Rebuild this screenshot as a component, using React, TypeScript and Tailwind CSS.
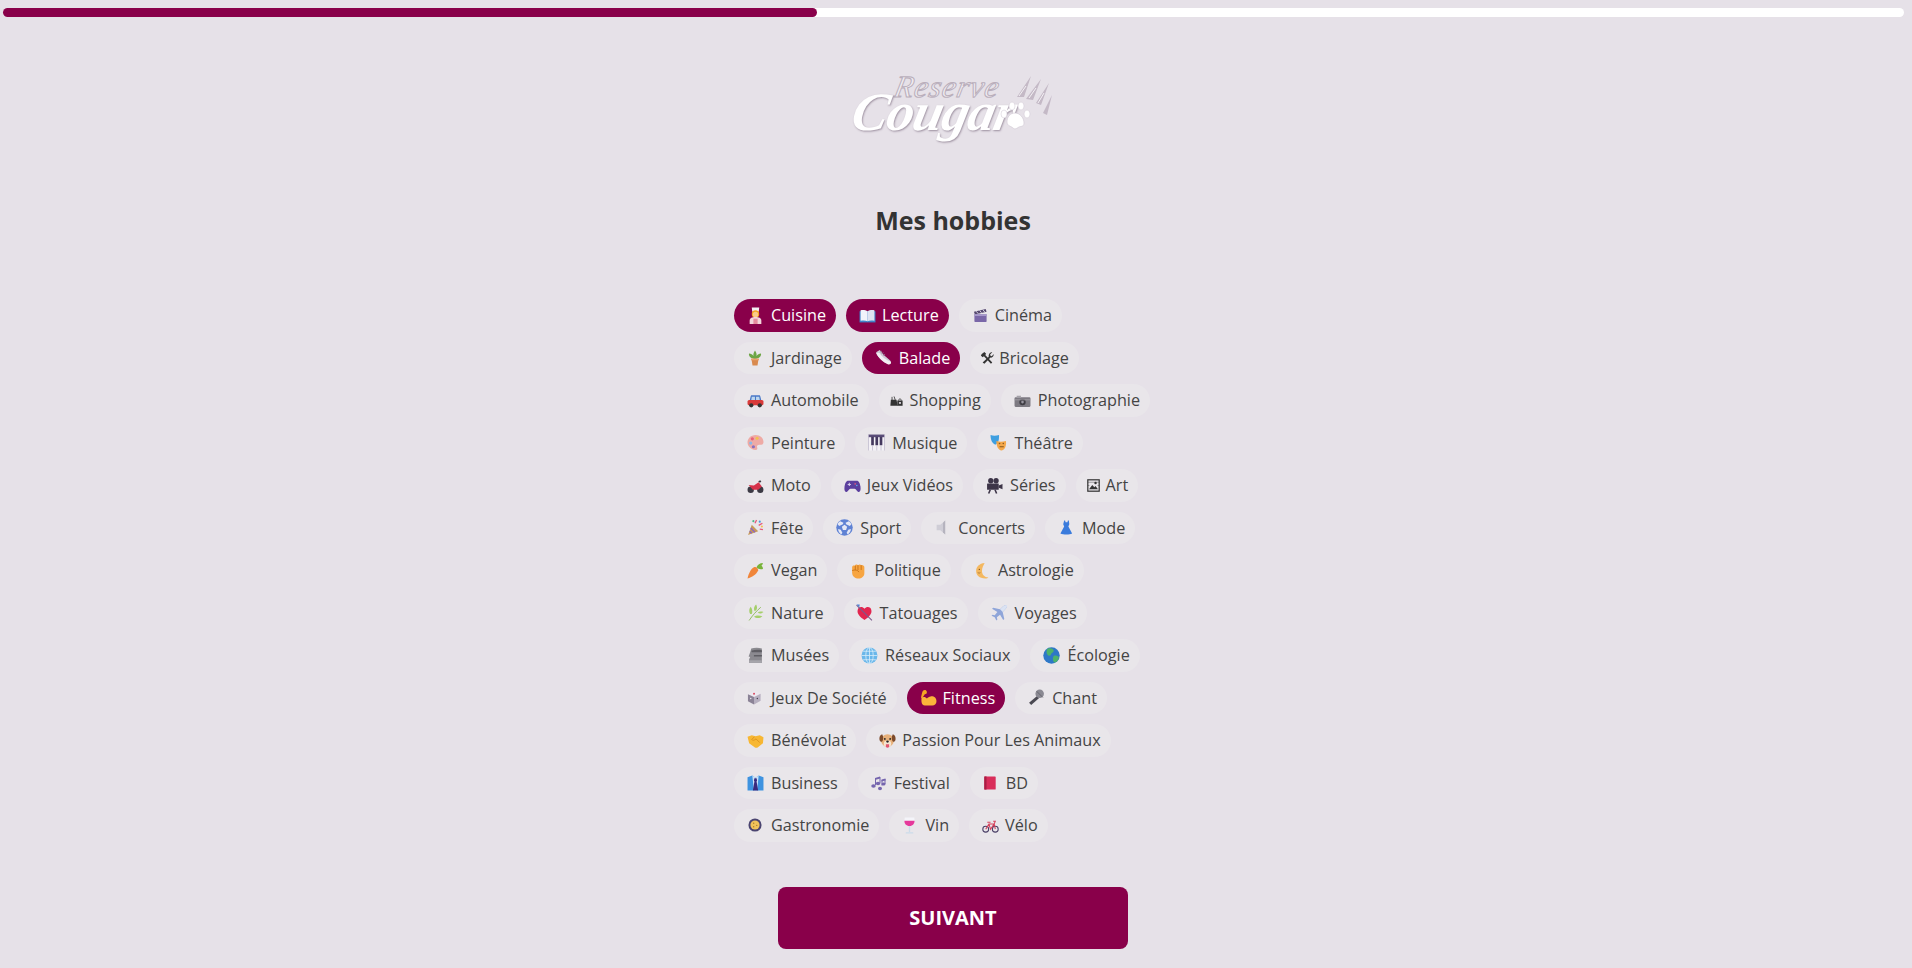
import type { ReactNode } from "react";

type Hobby = { label: string; lead: string; size: string; active?: boolean; icon: ReactNode };

const normal = "pl-[13px] pr-[7px]";

const hobbies: Hobby[] = [
  { label: "Cuisine", lead: normal, size: "w-[17px]", active: true, icon: <><path d="M9 1h14l-1 8H10z" fill="#f4f1f4" /><ellipse cx="16" cy="13" rx="7" ry="7" fill="#f5a623" /><circle cx="16" cy="14" r="5" fill="#fbc98a" /><path d="M5 32v-6c0-5 5-7 11-7s11 2 11 7v6z" fill="#f3d6dc" /><rect x="12" y="22" width="8" height="10" fill="#e58b9e" /></> },
  { label: "Lecture", lead: "pl-[13px] pr-[6px]", size: "w-[17px]", active: true, icon: <><path d="M1 8h30v21H1z" fill="#3f83c9" /><path d="M3 6c5-1 10 0 13 2v19c-3-2-8-2-13-1z" fill="#f2f4fb" /><path d="M29 6c-5-1-10 0-13 2v19c3-2 8-2 13-1z" fill="#dfe4f2" /></> },
  { label: "Cinéma", lead: "pl-[14px] pr-[7px]", size: "w-[15px]", icon: <><rect x="3" y="13" width="26" height="17" rx="1.5" fill="#7a67a8" /><path d="M2 8l25-6 2 6-25 6z" fill="#56496f" /><path d="M7 7l4 5M14 5l4 5M21 3.500l4 5" stroke="#d8d2e4" strokeWidth="2" /><rect x="3" y="13" width="26" height="4" fill="#a99bcb" /></> },
  { label: "Jardinage", lead: "pl-[13px] pr-[8px]", size: "w-[16px]", icon: <><path d="M16 18C7 17 3 12 4 7c4 0 7 2 9 5-1-4 1-8 3-11 2 3 4 7 3 11 2-3 5-5 9-5 1 5-3 10-12 11z" fill="#6da544" /><path d="M9 18h14l-2 13H11z" fill="#d98a4e" /><rect x="8" y="17" width="16" height="3.500" fill="#e9a06a" /></> },
  { label: "Balade", lead: normal, size: "w-[17px]", active: true, icon: <><path d="M2 6l7-4 7 9 12 10c3 3 2 8-2 7-9-2-16-8-20-14C4 11 3 9 2 6z" fill="#cfcad6" /><path d="M2 8c5 9 13 17 23 21 3 1 6-2 5-5-9-3-17-9-22-17z" fill="#f3eef3" /><path d="M9 6l4-2M12 9l4-2M15 12l4-2" stroke="#8f8798" strokeWidth="1.500" /></> },
  { label: "Bricolage", lead: "pl-[10px] pr-[5px]", size: "w-[14px]", icon: <><path d="M4 7l6-5 4 4-2 3 16 17-3 3L9 12 6 14 2 10z" fill="#333" /><path d="M28 3l-5 5 1 3 3 1 4-5c1 5-3 9-7 8L10 29l-4-3 14-13c-1-5 3-11 8-10z" fill="#333" /></> },
  { label: "Automobile", lead: normal, size: "w-[17px]", icon: <><path d="M7 8c0-1 1-2 2-2h14c1 0 2 1 2 2l2 8H5z" fill="#4a78c7" /><path d="M9 9h6v6H8zM17 9h6l1 6h-7z" fill="#bcd6ee" /><rect x="1" y="15" width="30" height="10" rx="3" fill="#d93a3a" /><circle cx="8" cy="25" r="4" fill="#333" /><circle cx="24" cy="25" r="4" fill="#333" /></> },
  { label: "Shopping", lead: "pl-[11px] pr-[7px]", size: "w-[13px]", icon: <><path d="M2 14h14l3 15H1z" fill="#333" /><path d="M5 15V7M13 15l-3-9" stroke="#333" strokeWidth="2" /><path d="M18 16h13v13H18z" fill="#333" /><path d="M21 16c0-5 7-5 7 0" stroke="#333" strokeWidth="2" fill="none" /><rect x="22" y="20" width="5" height="4" fill="#e6e1e8" /></> },
  { label: "Photographie", lead: normal, size: "w-[17px]", icon: <><rect x="1" y="10" width="30" height="18" rx="2" fill="#7d7a82" /><rect x="5" y="7" width="8" height="4" fill="#a5a2a9" /><circle cx="16" cy="19" r="6" fill="#3f3d44" /><circle cx="16" cy="19" r="2.500" fill="#9a97a1" /><rect x="1" y="14" width="30" height="1.500" fill="#a5a2a9" /></> },
  { label: "Peinture", lead: normal, size: "w-[17px]", icon: <><path d="M16 2C7 2 1 9 1 16s7 14 15 14c4 0 4-3 3-5-1-3 1-5 4-5h4c3 0 4-3 4-5C31 8 25 2 16 2z" fill="#eeaaa5" /><circle cx="10" cy="9" r="3" fill="#e9607a" /><circle cx="19" cy="8" r="3" fill="#f2c14e" /><circle cx="7" cy="17" r="3" fill="#8bb8e8" /><circle cx="12" cy="24" r="3" fill="#8a6fc0" /></> },
  { label: "Musique", lead: normal, size: "w-[17px]", icon: <><rect x="1" y="1" width="30" height="30" fill="#f4f2f7" /><rect x="1" y="1" width="30" height="5" fill="#5a4d78" /><path d="M6 5h5v16H6zM14 5h5v16h-5zM22 5h5v16h-5z" fill="#44395f" /><path d="M1 31V1M31 31V1M8.500 21v10M16.500 21v10M24.500 21v10" stroke="#b5aec4" strokeWidth="1.200" /></> },
  { label: "Théâtre", lead: normal, size: "w-[17px]", icon: <><path d="M1 2c5 2 10 2 16 0 0 8 0 15-7 18C4 18 1 11 1 2z" fill="#3f9fe0" /><path d="M12 13c6 2 11 2 18 0 1 8-1 16-8 18-7-1-10-9-10-18z" fill="#f5a84a" /><path d="M18 24h8" stroke="#8a5a20" strokeWidth="2" /><circle cx="18" cy="18" r="1.500" fill="#8a5a20" /><circle cx="25" cy="18" r="1.500" fill="#8a5a20" /></> },
  { label: "Moto", lead: normal, size: "w-[17px]", icon: <><circle cx="7" cy="24" r="6" fill="#3c3a44" /><circle cx="25" cy="24" r="6" fill="#3c3a44" /><path d="M3 15l10 1 4-3 5-3 6 8-7 6H11z" fill="#d6324a" /><path d="M21 8l4-2 2 3-3 2z" fill="#3c3a44" /></> },
  { label: "Jeux Vidéos", lead: "pl-[13px] pr-[6px]", size: "w-[17px]", icon: <><path d="M8 7h16c4 0 6 5 7 11 1 8-1 11-4 10-3-1-4-6-7-6h-8c-3 0-4 5-7 6-3 1-5-2-4-10C2 12 4 7 8 7z" fill="#5b3f9e" /><path d="M7 14h6M10 11v6" stroke="#d6cdec" strokeWidth="2" /><circle cx="21" cy="13" r="1.500" fill="#e55a7a" /><circle cx="24" cy="16" r="1.500" fill="#58a7e5" /></> },
  { label: "Séries", lead: "pl-[13px] pr-[7px]", size: "w-[17px]", icon: <><circle cx="9" cy="7" r="5" fill="#3d3548" /><circle cx="19" cy="7" r="5" fill="#3d3548" /><rect x="2" y="12" width="22" height="12" rx="1" fill="#3d3548" /><path d="M24 16l7-3v10l-7-3z" fill="#3d3548" /><path d="M8 24l-3 7M17 24l3 7" stroke="#3d3548" strokeWidth="3" /></> },
  { label: "Art", lead: "pl-[11px] pr-[6px]", size: "w-[13px]", icon: <><rect x="2" y="2" width="28" height="28" fill="none" stroke="#333" strokeWidth="3" /><path d="M5 25l8-10 5 5 3-3 6 8z" fill="#333" /><circle cx="21" cy="10" r="3" fill="#333" /><path d="M2 8h28M2 16h4M26 16h4" stroke="#333" strokeWidth="1" /></> },
  { label: "Fête", lead: normal, size: "w-[17px]", icon: <><path d="M2 30l7-19 12 12z" fill="#c79a5a" /><path d="M5 23l4 4M7 17l8 8" stroke="#8a64c8" strokeWidth="2.500" /><path d="M15 8l3-6M22 12l7-4M24 19l6 1" stroke="#e55a7a" strokeWidth="2.500" /><circle cx="24" cy="5" r="2" fill="#4a9be0" /><circle cx="28" cy="14" r="2" fill="#f2c14e" /><circle cx="12" cy="4" r="2" fill="#4fb58a" /></> },
  { label: "Sport", lead: normal, size: "w-[17px]", icon: <><circle cx="16" cy="16" r="15.500" fill="#5f82d4" /><path d="M16 11l5 3.500-2 6h-6l-2-6zM8 4l6 3-1 3-7 3-3-3c1-3 3-5 5-6zM24 4c2 1 4 3 5 6l-3 3-7-3-1-3zM4 19l5 1 3 6-2 3c-3-2-6-5-6-10zM28 19c0 5-3 8-6 10l-2-3 3-6z" fill="#e4e8f6" /></> },
  { label: "Concerts", lead: normal, size: "w-[17px]", icon: <><path d="M5 11h7l9-8v26l-9-8H5z" fill="#cfcdd6" /><path d="M17 7l4-4v26l-4-4z" fill="#b5b3be" /></> },
  { label: "Mode", lead: "pl-[14px] pr-[8px]", size: "w-[15px]", icon: <><path d="M11 1h2l1 4h4l1-4h2l1 8-2 5 8 15c-3 2-7 2-12 2s-10 0-13-2l8-15-2-5z" fill="#3a7bdc" /></> },
  { label: "Vegan", lead: normal, size: "w-[17px]", icon: <><path d="M1 31c2-9 6-18 12-21 4-2 8 2 8 6-3 7-12 13-20 15z" fill="#f0853a" /><path d="M18 10c2-5 6-8 12-8-1 3-1 4-3 5 2 1 3 3 3 6-4 1-9 1-12-3z" fill="#78b33a" /></> },
  { label: "Politique", lead: normal, size: "w-[17px]", icon: <><path d="M4 10c0-3 3-4 5-3 1-3 5-3 6-1 2-2 5-2 6 0 3-1 6 1 6 4v11c0 6-5 10-11 10S4 27 4 20z" fill="#f7a541" /><path d="M10 7v8M15 6v9M21 6v9M4 16c5-2 11-1 13 3" stroke="#c9741a" strokeWidth="1.800" fill="none" /></> },
  { label: "Astrologie", lead: normal, size: "w-[17px]", icon: <><path d="M20 2C10 3 4 9 4 17s6 14 17 14c3 0 5-1 6-2-7 0-12-5-12-12 0-6 3-11 5-15z" fill="#f4b860" /><circle cx="10" cy="14" r="1.200" fill="#7a4d1c" /><path d="M7 20c2 1 4 1 5 0" stroke="#7a4d1c" fill="none" /></> },
  { label: "Nature", lead: normal, size: "w-[17px]", icon: <><path d="M4 31C10 22 17 14 26 6" stroke="#7fb545" strokeWidth="1.500" fill="none" /><path d="M6 19C3 14 4 8 7 5c3 4 4 9 2 14zM14 13c-2-5 0-9 3-12 2 3 3 8 0 11zM13 24c4-3 10-3 16-1-4 4-11 5-16 1zM20 16c3-2 7-2 11-1-3 3-7 4-11 1z" fill="#a5cf6b" /></> },
  { label: "Tatouages", lead: "pl-[12px] pr-[7px]", size: "w-[17px]", icon: <><path d="M16 30C7 24 2 18 3 12c1-7 9-8 13-3 4-5 12-4 13 3 1 6-4 12-13 18z" fill="#e2264f" /><path d="M1 2l29 29" stroke="#7d5a8c" strokeWidth="2" /><path d="M1 1h6l-1 5z" fill="#4a84d6" /></> },
  { label: "Voyages", lead: normal, size: "w-[17px]", icon: <><path d="M30 2c-3-1-6 1-9 4l-4 4L4 7 2 9l10 6-5 6-4-1-2 2 6 3 3 6 2-2-1-4 6-5 6 10 2-2-3-13 4-4c3-3 5-6 4-9z" fill="#8fa5d9" /><path d="M30 2c-3-1-6 1-9 4l-4 4 5 5 4-4c3-3 5-6 4-9z" fill="#dbe3f3" /></> },
  { label: "Musées", lead: normal, size: "w-[17px]", icon: <><path d="M8 3c6-2 14-2 20 0v27H4v-7l2-4-3-1 3-8z" fill="#8b8a90" /><path d="M8 7c6-2 14-2 20-1v4H9zM13 15h15v3H13z" fill="#5e5d63" /><path d="M4 25h24v5H4z" fill="#a6a5ab" /></> },
  { label: "Réseaux Sociaux", lead: "pl-[12px] pr-[7px]", size: "w-[17px]", icon: <><circle cx="16" cy="16" r="15" fill="#6ab7ea" /><ellipse cx="16" cy="16" rx="7" ry="15" fill="none" stroke="#d8eefa" strokeWidth="1.500" /><path d="M16 1v30M1 16h30M4 8h24M4 24h24" stroke="#d8eefa" strokeWidth="1.500" /></> },
  { label: "Écologie", lead: normal, size: "w-[17px]", icon: <><circle cx="16" cy="16" r="15.500" fill="#2e78c7" /><path d="M9 3c5-2 10 0 11 3 1 4-4 4-5 8-1 3-5 3-7 0C6 11 6 6 9 3zM20 17c4-2 9 0 10 3-1 5-5 9-9 9-3-3-3-9-1-12z" fill="#4db36b" /></> },
  { label: "Jeux De Société", lead: "pl-[13px] pr-[9px]", size: "w-[15px]", icon: <><path d="M15 2l14 6v15l-14 8-13-7V9z" fill="#ece8ef" /><path d="M15 15v16l14-8V8z" fill="#b7b0c0" /><path d="M2 9l13 6v16L2 24z" fill="#8b8396" /><circle cx="15" cy="8" r="2" fill="#d83c55" /><circle cx="8" cy="18" r="1.500" fill="#f2f0f5" /><circle cx="22" cy="18" r="1.500" fill="#443d4e" /></> },
  { label: "Fitness", lead: "pl-[13px] pr-[6px]", size: "w-[17px]", active: true, icon: <><path d="M9 2c-3 0-4 2-5 5l-2 8c0 2 2 3 3 1l4-6 3-1c2-2 1-7-3-7z" fill="#f5a623" /><path d="M3 16c-1 7 0 15 6 15h14c5 0 8-3 8-8 0-6-5-10-11-9-3 0-5 2-7 4-2-3-6-4-10-2z" fill="#fbb43a" /></> },
  { label: "Chant", lead: normal, size: "w-[17px]", icon: <><path d="M17 13l4 4L6 30l-4-4z" fill="#4a4952" /><circle cx="22" cy="9" r="8" fill="#8a8992" /><path d="M16 4l12 12" stroke="#5e5d66" strokeWidth="1.500" /></> },
  { label: "Bénévolat", lead: normal, size: "w-[17px]", icon: <><path d="M1 9l8-3 7 2 8-2 7 4-1 11-10 8c-2 1-3 1-5 0L4 21z" fill="#f7b733" /><path d="M14 9l-5 5c1 2 3 2 5 1l3-2 7 7" stroke="#d98b1a" strokeWidth="1.500" fill="none" /></> },
  { label: "Passion Pour Les Animaux", lead: "pl-[13px] pr-[6px]", size: "w-[17px]", icon: <><circle cx="16" cy="16" r="12" fill="#e7b07a" /><path d="M6 4c-4 1-6 5-5 11 1 3 3 4 5 3 2-3 3-9 0-14zM26 4c4 1 6 5 5 11-1 3-3 4-5 3-2-3-3-9 0-14z" fill="#7d4a2a" /><ellipse cx="16" cy="22" rx="7" ry="6" fill="#f6e4d0" /><circle cx="11" cy="13" r="1.700" fill="#222" /><circle cx="21" cy="13" r="1.700" fill="#222" /><ellipse cx="16" cy="18" rx="2.500" ry="2" fill="#222" /><path d="M13 23h6v5c-2 2-4 2-6 0z" fill="#e25670" /></> },
  { label: "Business", lead: normal, size: "w-[17px]", icon: <><path d="M1 6l9-3 6 4 6-4 9 3v25H1z" fill="#3e93e0" /><path d="M10 3l6 4 6-4-3 28h-6z" fill="#cfe3f7" /><path d="M14 8h4l1 4-1 2 3 17H11l3-17-1-2z" fill="#3a2a7d" /></> },
  { label: "Festival", lead: "pl-[12px] pr-[8px]", size: "w-[16px]", icon: <><path d="M10 6l10-3v4l-10 3zM23 9l8-2v4l-8 2z" fill="#7565ae" /><path d="M11 8v12M20 4v12M24 10v11M30 8v10" stroke="#7565ae" strokeWidth="2" /><ellipse cx="7" cy="22" rx="4.500" ry="3.500" fill="#7565ae" /><ellipse cx="16" cy="17" rx="4.500" ry="3.500" fill="#7565ae" /><ellipse cx="20" cy="27" rx="4" ry="3.500" fill="#7565ae" /><ellipse cx="27" cy="18" rx="4" ry="3" fill="#7565ae" /></> },
  { label: "BD", lead: "pl-[13px] pr-[9px]", size: "w-[14px]", icon: <><rect x="3" y="1" width="26" height="30" rx="1.500" fill="#d92d5a" /><rect x="3" y="1" width="5" height="30" fill="#a81f44" /></> },
  { label: "Gastronomie", lead: "pl-[14px] pr-[9px]", size: "w-[14px]", icon: <><circle cx="16" cy="16" r="15" fill="#4a4470" /><circle cx="16" cy="16" r="10.500" fill="#f0c25a" /><circle cx="13" cy="12" r="1.500" fill="#a5792a" /><circle cx="20" cy="17" r="1.500" fill="#a5792a" /><circle cx="13" cy="20" r="1.500" fill="#a5792a" /></> },
  { label: "Vin", lead: "pl-[12px] pr-[7px]", size: "w-[17px]", icon: <><path d="M7 1h18c1 7 1 15-9 16C6 16 6 8 7 1z" fill="#f4f4f9" /><path d="M6.500 7h19c0 5-3 10-9.500 10S6 12 6.500 7z" fill="#e5399b" /><path d="M16 17v11M9 30h14" stroke="#cbdcea" strokeWidth="2.500" /></> },
  { label: "Vélo", lead: "pl-[13px] pr-[6px]", size: "w-[17px]", icon: <><circle cx="7" cy="23" r="5.500" fill="none" stroke="#4a3f66" strokeWidth="2" /><circle cx="25" cy="23" r="5.500" fill="none" stroke="#4a3f66" strokeWidth="2" /><path d="M7 23l6-10h10l2 10M13 13l3 10 7-10M10 10h6M21 8h4l-2 5" stroke="#d6405a" strokeWidth="2" fill="none" /></> },
];

function Chip({ hobby }: { hobby: Hobby }) {
  return (
    <div
      className={`m-[5px] flex h-[32.5px] items-center rounded-full pr-[10px] text-[16.2px] ${
        hobby.active ? "bg-[#89004a] text-white" : "bg-[#e9e6ea] text-[#444444]"
      }`}
    >
      <span className={`flex shrink-0 items-center ${hobby.lead}`}>
        <svg viewBox="0 0 32 32" className={`${hobby.size} shrink-0`}>
          {hobby.icon}
        </svg>
      </span>
      <span className="whitespace-nowrap">{hobby.label}</span>
    </div>
  );
}

function Logo() {
  return (
    <div className="relative mx-auto mt-[53px] h-[72px] w-[205px]">
      <span className="absolute left-[44px] top-[1px] -skew-x-12 font-['Liberation_Serif',serif] text-[31px] italic leading-none tracking-[1px] text-[#efebf0] [-webkit-text-stroke:1px_#b9aebb]">
        Reserve
      </span>
      <span className="absolute left-[2px] top-[15px] -skew-x-12 font-['Liberation_Serif',serif] text-[54px] font-bold italic leading-none tracking-[-1px] text-white [text-shadow:1px_1px_2px_#9c8f9f]">
        Cougar
      </span>
      <svg viewBox="0 0 60 72" className="absolute left-[148px] top-0 h-[72px] w-[60px]">
        <path d="M18 27L32 6l-7 21M27 29L42 9l-8 21M37 33L50 13l-8 22M44 43l9-18-5 20" fill="#c4b9c6" />
        <path d="M20 26l7-10M30 28l7-10M39 33l6-10" stroke="#f4f1f5" strokeWidth="1" />
        <path d="M16 43c5 0 9 5 9 10 0 4-3 3-5 4-2 1-4 3-6 1-2-2-6-2-6-6 0-5 3-9 8-9z" fill="#fff" stroke="#cfc6d2" strokeWidth="0.600" />
        <ellipse cx="5" cy="44" rx="3" ry="4" fill="#fff" stroke="#cfc6d2" strokeWidth="0.500" />
        <ellipse cx="13" cy="36" rx="3" ry="4" fill="#fff" stroke="#cfc6d2" strokeWidth="0.500" />
        <ellipse cx="22" cy="36" rx="3" ry="4" fill="#fff" stroke="#cfc6d2" strokeWidth="0.500" />
        <ellipse cx="28" cy="44" rx="3" ry="4" fill="#fff" stroke="#cfc6d2" strokeWidth="0.500" />
      </svg>
    </div>
  );
}

export default function App() {
  return (
    <div className="min-h-screen bg-[#e6e1e8] pt-2 pr-[6px] font-['Open_Sans',sans-serif]">
      <div className="ml-[3px] mr-[2px] h-[9px] rounded-full bg-white">
        <div className="h-full w-[814px] rounded-full bg-[#89004a]" />
      </div>
      <Logo />
      <h1 className="mt-[62px] text-center text-[25px] font-bold leading-[33px] text-[#333333]">Mes hobbies</h1>
      <div className="mx-auto mt-[57px] flex w-[448px] flex-wrap">
        {hobbies.map((h) => (
          <Chip key={h.label} hobby={h} />
        ))}
      </div>
      <button className="mx-auto mt-[40px] block h-[62px] w-[350px] rounded-lg bg-[#89004a] text-xl font-bold text-white">
        SUIVANT
      </button>
    </div>
  );
}
